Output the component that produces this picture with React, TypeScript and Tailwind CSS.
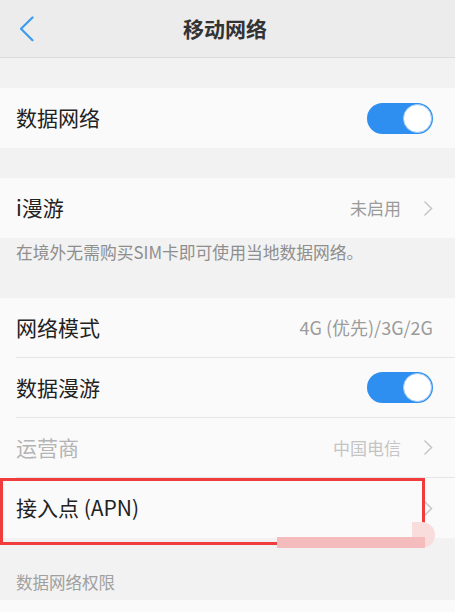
const font = { fontFamily: '"Noto Sans CJK SC", "Noto Sans", sans-serif' };

function Toggle() {
  return (
    <div className="w-[66px] h-[31px] rounded-full bg-[#2e8ff0] flex items-center justify-end pr-[1px]">
      <div className="w-[29px] h-[29px] rounded-full bg-white border border-[#9cc9f7]" />
    </div>
  );
}

function Chevron() {
  return (
    <svg width="10" height="17" viewBox="0 0 10 17" className="ml-[22px]">
      <path d="M1.5 1.5 L8.5 8.5 L1.5 15.5" fill="none" stroke="#c8c8c8" strokeWidth="1.6" />
    </svg>
  );
}

function Row({
  label,
  muted,
  right,
  divider,
}: {
  label: string;
  muted?: boolean;
  right?: React.ReactNode;
  divider?: boolean;
}) {
  return (
    <div className="bg-[#fafafa] pl-4">
      <div
        className={`h-[60px] flex items-center justify-between pr-[22px] ${
          divider ? "border-b border-[#e6e6e6]" : ""
        }`}
      >
        <span className={`text-[21px] ${muted ? "text-[#b4b4b4]" : "text-[#222222]"}`}>{label}</span>
        <div className="flex items-center">{right}</div>
      </div>
    </div>
  );
}

export default function App() {
  return (
    <div className="w-[455px] h-[612px] bg-[#f2f2f2] relative overflow-hidden" style={font}>
      {/* header */}
      <div className="h-[58px] bg-[#ececec] border-b border-[#dcdcdc] flex items-center relative">
        <svg width="16" height="26" viewBox="0 0 16 26" className="absolute left-[19px] top-[16px]">
          <path d="M13.5 1.5 L2 12.8 L13.5 24.2" fill="none" stroke="#3d9bf0" strokeWidth="2.2" strokeLinecap="round" strokeLinejoin="round" />
        </svg>
        <div className="w-full text-center text-[21px] font-bold text-[#333333] pr-[5px]">移动网络</div>
      </div>

      <div className="h-[30px]" />
      <Row label="数据网络" right={<Toggle />} />

      <div className="h-[30px]" />
      <Row
        label="i漫游"
        right={
          <>
            <span className="text-[17px] text-[#9b9b9b]">未启用</span>
            <Chevron />
          </>
        }
      />
      <div className="h-[60px] pl-4 pt-[2px] text-[16.8px] text-[#8e8e8e]">在境外无需购买SIM卡即可使用当地数据网络。</div>

      <Row
        label="网络模式"
        divider
        right={<span className="text-[18px] text-[#9b9b9b]">4G (优先)/3G/2G</span>}
      />
      <Row label="数据漫游" divider right={<Toggle />} />
      <Row
        label="运营商"
        muted
        divider
        right={
          <>
            <span className="text-[17px] text-[#c4c4c4]">中国电信</span>
            <Chevron />
          </>
        }
      />
      <Row label="接入点 (APN)" right={<Chevron />} />

      <div className="h-[62px] pl-4 flex items-end pb-[5px] text-[16.5px] text-[#a0a0a0]">数据网络权限</div>
      <div className="h-[20px] bg-[#fafafa]" />

      {/* annotation */}
      <div className="absolute left-0 top-[478px] w-[425px] h-[67px] border-[3px] border-[#f03c3c]" />
      <div className="absolute left-[412px] top-[522px] w-[23px] h-[26px] rounded-r-full bg-[#f9dcdc]" />
      <div className="absolute left-[277px] top-[537px] w-[148px] h-[11px] bg-[#f4bcbc]" />
    </div>
  );
}
